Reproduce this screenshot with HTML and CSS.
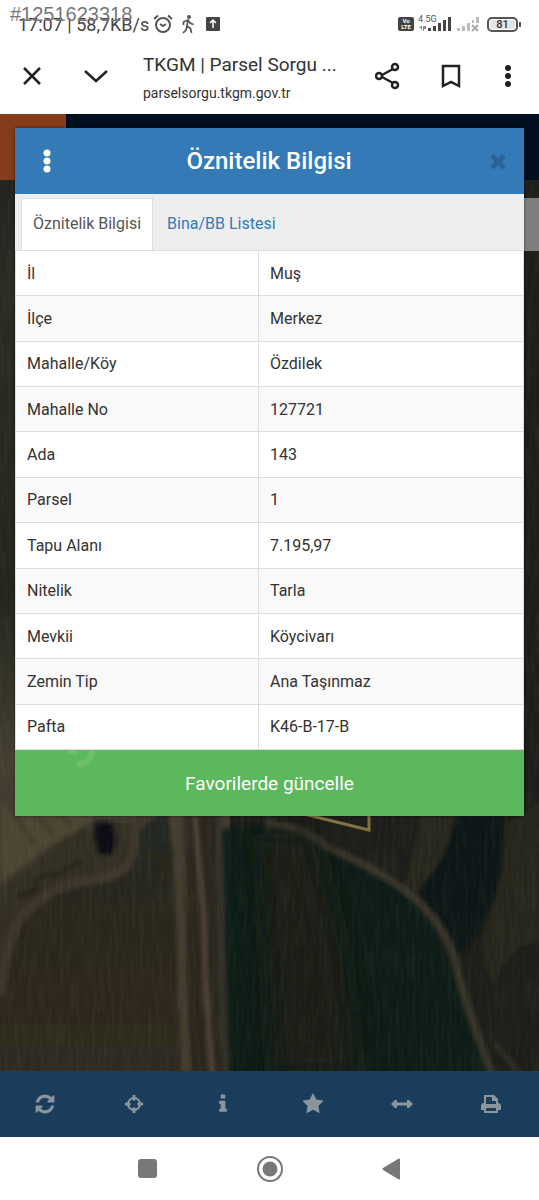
FILE: index.html
```html
<!DOCTYPE html>
<html lang="tr">
<head>
  <meta charset="UTF-8">
  <title>TKGM | Parsel Sorgu</title>
  <meta name="viewport" content="width=device-width, initial-scale=1.0">
  <link rel="stylesheet" href="styles.css">
</head>
<body>
  <div class="status-bar">
    <span class="ilan-no">#1251623318</span>
    <span class="clock">17:07 | 58,7KB/s</span>
    <svg class="alarm" width="20" height="20" viewBox="0 0 20 20" fill="none" stroke="#555" stroke-width="2">
      <circle cx="10" cy="11" r="7"/>
      <path d="M7 10l3 2 3-2M1 5l4-3.500M19 5l-4-3.500"/>
    </svg>
    <svg class="walk" width="12" height="20" viewBox="0 0 12 20" fill="none" stroke="#555" stroke-width="1.700">
      <circle cx="7" cy="3" r="2" fill="#555" stroke="none"/>
      <path d="M1.500 11V8L6 6l2 3 3.500 1.500M6 6l-1 6 3.500 2.500 1 4.500M5 12l-1 4-3 3"/>
    </svg>
    <svg class="upload" width="14" height="20" viewBox="0 0 14 20">
      <rect y="3" width="14" height="14" rx="1" fill="#444"/>
      <path d="M7 14V6M4 9l3-3 3 3" fill="none" stroke="#fff" stroke-width="1.500"/>
    </svg>
    <div class="signals">
      <span class="volte">Vo<br>LTE</span>
      <span class="network">
        <span>4.5G</span>
        <svg width="34" height="16" viewBox="0 0 34 16" fill="#444">
          <path d="M3 10h1v4H3v-2H1zM5 10h3v3H6v2H5z" fill="#888"/>
          <path d="M10 12h3v3h-3zM15 10h3v5h-3zM20 7h3v8h-3zM25 4h3v11h-3zM30 1h3v14h-3z"/>
        </svg>
      </span>
      <svg width="24" height="16" viewBox="0 0 24 16" fill="#bbb">
        <path d="M1 12h3v3H1zM6 10h3v5H6zM11 7h3v8h-3zM16 4h2v3h-2zM20 1h3v6h-3z"/>
        <path d="M16 9l6 6M22 9l-6 6" stroke="#aaa" stroke-width="2"/>
      </svg>
      <span class="battery">81</span>
    </div>
  </div>

  <header class="browser-bar">
    <button class="icon-btn" aria-label="Kapat">
      <svg width="24" height="24" viewBox="0 0 24 24"><path d="M4 4l16 16M20 4L4 20"/></svg>
    </button>
    <button class="icon-btn" aria-label="Küçült">
      <svg width="24" height="24" viewBox="0 0 24 24"><path d="M1 7l11 10L23 7"/></svg>
    </button>
    <div class="page-info">
      <div class="page-title">TKGM | Parsel Sorgu ...</div>
      <div class="page-url">parselsorgu.tkgm.gov.tr</div>
    </div>
    <button class="icon-btn share" aria-label="Paylaş">
      <svg width="26" height="28" viewBox="0 0 26 28"><path d="M7 13l11-6M7 15l11 6"/><circle cx="4" cy="14" r="3"/><circle cx="20" cy="5" r="3"/><circle cx="20" cy="23" r="3"/></svg>
    </button>
    <button class="icon-btn bookmark" aria-label="Yer işareti">
      <svg width="20" height="26" viewBox="0 0 20 26"><path d="M2 3h16v20l-8-4-8 4z"/></svg>
    </button>
    <button class="icon-btn more" aria-label="Diğer">
      <svg width="6" height="24" viewBox="0 0 6 24"><g fill="#222" stroke="none"><circle cx="3" cy="4" r="3"/><circle cx="3" cy="12" r="3"/><circle cx="3" cy="20" r="3"/></g></svg>
    </button>
  </header>

  <main class="map">
    <svg class="map-image" viewBox="0 0 539 957" preserveAspectRatio="xMidYMax slice" aria-hidden="true">
      <defs>
        <filter id="soft" x="-5%" y="-5%" width="110%" height="110%"><feGaussianBlur stdDeviation="2"/></filter>
        <filter id="blend" x="-20%" y="-20%" width="140%" height="140%"><feGaussianBlur stdDeviation="12"/></filter>
        <filter id="soil" x="0" y="0" width="100%" height="100%">
          <feTurbulence type="fractalNoise" baseFrequency="0.25 0.03" numOctaves="3" seed="4"/>
          <feColorMatrix values="0 0 0 0 .5  0 0 0 0 .48  0 0 0 0 .38  .9 0 0 0 -.35"/>
        </filter>
        <linearGradient id="side" x1="0" y1="0" x2="0" y2="1">
          <stop offset="0" stop-color="#1c1e1c"/>
          <stop offset=".18" stop-color="#2c2b24"/>
          <stop offset=".5" stop-color="#23251d"/>
          <stop offset=".68" stop-color="#433e30"/>
          <stop offset="1" stop-color="#2b271f"/>
        </linearGradient>
        <linearGradient id="field" x1="0" y1="0" x2="0" y2="1">
          <stop offset="0" stop-color="#222720"/>
          <stop offset=".5" stop-color="#2c271f"/>
          <stop offset="1" stop-color="#302a20"/>
        </linearGradient>
      </defs>
      <rect width="539" height="957" fill="#1d1e19"/>
      <rect width="230" height="957" fill="url(#side)"/>
      <g filter="url(#soft)">
        <path d="M0 690h100l-10 18-38 22-52 40z" fill="#4c4532"/>
        <path d="M8 690l26 40M28 690l24 30M50 690l22 22" stroke="#3d3829" stroke-width="4"/>
        <path d="M0 775l52-42 40-24h50l-14 50-60 16-40 20-28 30z" fill="#332e23"/>
        <path d="M134 714q10-14 36-14l6 90 8 177H-10v-74q15-76 52-102 24-20 62-26 22-2 26-51z" fill="url(#field)"/>
        <path d="M0 880q8-60 22-78 26-30 68-36 34-4 40-20t4-26q4-14 20-20" fill="none" stroke="#3c3529" stroke-width="10"/>
        <path d="M16 782q22-2 20-12t24-10l22-14" fill="none" stroke="#262119" stroke-width="4"/>
        <path d="M95 708h18l3 20-4 14-14-2-4-16z" fill="#0b0e12"/>
        <path d="M186 700h34l6 267h-38z" fill="#2a251f"/>
        <path d="M172 700q7 30 8 90t7 177" fill="none" stroke="#453d2d" stroke-width="8"/>
        <path d="M218 700q0 50 2 130t6 137" fill="none" stroke="#33302a" stroke-width="5"/>
        <path d="M222 716q60-18 100 10 90 40 120 104 20 50 52 137H230z" fill="#111a17"/>
        <path d="M428 745q24-18 30-45h44q4 60-12 95l-28 48q-20-10-42-60z" fill="#0b1316"/>
        <path d="M405 770q8-30 16-70h34q-6 40-22 58t-18 24z" fill="#26251d"/>
        <path d="M539 690v140q-20-10-46 40-16-34-4-70 14-28 18-90z" fill="#25251c"/>
        <path d="M265 708q35 4 64 26 60 26 90 54 30 30 38 66t38 113" fill="none" stroke="#39352a" stroke-width="7"/>
        <path d="M495 930l30 35" stroke="#312e25" stroke-width="5"/>
        <path d="M195 702q4 50 8 90l3 80q3 50 7 95" fill="none" stroke="#54463b" stroke-width="4"/>
      </g>
      <path d="M262 720h50q14 60 30 120l14 120h-80q-8-120-14-240z" fill="#1b1f18" filter="url(#blend)"/>
      <rect y="60" width="539" height="897" filter="url(#soil)" opacity=".14"/>
      <path d="M300 699l69 17v-20" fill="none" stroke="#7d7442" stroke-width="3"/>
    </svg>
    <div class="site-bar"><div class="site-logo"></div></div>
    <div class="side-control"></div>

    <section class="modal">
      <div class="modal-header">
        <button class="menu-btn" aria-label="Menü">
          <svg width="8" height="24" viewBox="0 0 8 24" fill="#fff"><circle cx="4" cy="4" r="3.500"/><circle cx="4" cy="12" r="3.500"/><circle cx="4" cy="20" r="3.500"/></svg>
        </button>
        <h1>Öznitelik Bilgisi</h1>
        <button class="close-btn" aria-label="Kapat">
          <svg width="22" height="22" viewBox="0 0 1792 1792" fill="#2a6295"><path d="M1490 1322q0 40-28 68l-136 136q-28 28-68 28t-68-28l-294-294-294 294q-28 28-68 28t-68-28l-136-136q-28-28-28-68t28-68l294-294-294-294q-28-28-28-68t28-68l136-136q28-28 68-28t68 28l294 294 294-294q28-28 68-28t68 28l136 136q28 28 28 68t-28 68l-294 294 294 294q28 28 28 68z"/></svg>
        </button>
      </div>
      <nav class="tabs">
        <a href="#oznitelik" class="active">Öznitelik Bilgisi</a>
        <a href="#bina">Bina/BB Listesi</a>
      </nav>
      <table class="bilgi" id="oznitelik">
        <tbody>
          <tr><th scope="row">İl</th><td>Muş</td></tr>
          <tr><th scope="row">İlçe</th><td>Merkez</td></tr>
          <tr><th scope="row">Mahalle/Köy</th><td>Özdilek</td></tr>
          <tr><th scope="row">Mahalle No</th><td>127721</td></tr>
          <tr><th scope="row">Ada</th><td>143</td></tr>
          <tr><th scope="row">Parsel</th><td>1</td></tr>
          <tr><th scope="row">Tapu Alanı</th><td>7.195,97</td></tr>
          <tr><th scope="row">Nitelik</th><td>Tarla</td></tr>
          <tr><th scope="row">Mevkii</th><td>Köycivarı</td></tr>
          <tr><th scope="row">Zemin Tip</th><td>Ana Taşınmaz</td></tr>
          <tr><th scope="row">Pafta</th><td>K46-B-17-B</td></tr>
        </tbody>
      </table>
      <button class="btn-favori">
        <svg class="watermark" width="40" height="18" viewBox="0 0 40 18" fill="none" stroke="#6cc06c" stroke-width="6"><path d="M8 0q4 3 8 1M16 14q12 1 16-14"/></svg>
        Favorilerde güncelle
      </button>
    </section>
  </main>

  <nav class="toolbar">
    <button aria-label="Yenile">
      <svg width="22" height="22" viewBox="0 0 1792 1792"><path d="M1639 1056q0 5-1 7-64 268-268 434.500t-478 166.500q-146 0-282.500-55t-243.500-157l-129 129q-19 19-45 19t-45-19-19-45v-448q0-26 19-45t45-19h448q26 0 45 19t19 45-19 45l-137 137q71 66 161 102t187 36q134 0 250-65t186-179q11-17 53-117 8-23 30-23h192q13 0 22.500 9.500t9.500 22.500zm25-800v448q0 26-19 45t-45 19h-448q-26 0-45-19t-19-45 19-45l138-138q-148-137-349-137-134 0-250 65t-186 179q-11 17-53 117-8 23-30 23h-199q-13 0-22.500-9.500t-9.500-22.500v-7q65-268 270-434.500t480-166.500q146 0 284 55.500t245 156.500l130-129q19-19 45-19t45 19 19 45z"/></svg>
    </button>
    <button aria-label="Konum">
      <svg width="20" height="20" viewBox="0 0 20 20"><circle cx="10" cy="10" r="6" fill="none" stroke="#8c949c" stroke-width="2"/><path d="M8.500 1h3v5.500h-3zM8.500 13.500h3V19h-3zM1 8.500h5.500v3H1zM13.500 8.500H19v3h-5.500z"/></svg>
    </button>
    <button aria-label="Bilgi">
      <svg width="22" height="22" viewBox="0 0 1792 1792"><path d="M1216 1344v128q0 26-19 45t-45 19h-512q-26 0-45-19t-19-45v-128q0-26 19-45t45-19h64v-384h-64q-26 0-45-19t-19-45v-128q0-26 19-45t45-19h384q26 0 45 19t19 45v576h64q26 0 45 19t19 45zm-128-1152v192q0 26-19 45t-45 19h-256q-26 0-45-19t-19-45v-192q0-26 19-45t45-19h256q26 0 45 19t19 45z"/></svg>
    </button>
    <button aria-label="Favoriler">
      <svg width="22" height="22" viewBox="0 0 1792 1792"><path d="M1728 647q0 22-26 48l-363 354 86 500q1 7 1 20 0 21-10.500 35.500t-30.500 14.500q-19 0-40-12l-449-236-449 236q-22 12-40 12-21 0-31.500-14.500t-10.500-35.500q0-6 2-20l86-500-364-354q-25-27-25-48 0-37 56-46l502-73 225-455q19-41 49-41t49 41l225 455 502 73q56 9 56 46z"/></svg>
    </button>
    <button aria-label="Ölçüm">
      <svg width="22" height="20" viewBox="0 0 22 20"><path d="M0 10l4-4h2v2.500h10V6h2l4 4-4 4h-2v-2.500H6V14H4z"/></svg>
    </button>
    <button aria-label="Yazdır">
      <svg width="20" height="20" viewBox="0 0 20 20"><path fill-rule="evenodd" d="M3 1h10l4 4v4q3 0 3 3v4h-3v3H3v-3H0v-4q0-3 3-3zM5 3v7h10V7h-4V3zM5 14v3h10v-3z"/></svg>
    </button>
  </nav>

  <nav class="android-nav">
    <button aria-label="Son uygulamalar"><svg width="20" height="20" viewBox="0 0 20 20"><rect x="0" y="0" width="19" height="19" rx="3"/></svg></button>
    <button aria-label="Ana ekran"><svg width="26" height="26" viewBox="0 0 26 26"><circle cx="13" cy="13" r="12" fill="none" stroke="#787878" stroke-width="2"/><circle cx="13" cy="13" r="7.500"/></svg></button>
    <button aria-label="Geri"><svg width="20" height="22" viewBox="0 0 20 22"><path d="M18 1v20q-1 1-2 0L1 12q-1-1 0-2L16 1q1-1 2 0z"/></svg></button>
  </nav>
</body>
</html>
```
FILE: styles.css
```css
* {
  box-sizing: border-box;
}
body {
  font-family: Roboto, "Liberation Sans", sans-serif;
  margin: 0;
  min-height: 100vh;
  display: flex;
  flex-direction: column;
  background: #fff;
  color: #333;
}
button {
  border: none;
  background: none;
  padding: 0;
  font-family: inherit;
  cursor: pointer;
}
svg {
  display: block;
}

/* telefon durum çubuğu */
.status-bar {
  position: relative;
  display: flex;
  align-items: center;
  height: 38px;
  padding: 10px 21px 0 18px;
}
.ilan-no {
  position: absolute;
  top: 2px;
  left: 10px;
  font: 20px/24px "Liberation Sans", sans-serif;
  color: #777;
}
.clock {
  padding-top: 2px;
  font-size: 18px;
  line-height: 24px;
  color: #444;
}
.alarm {
  margin-left: 4px;
}
.walk {
  margin-left: 9px;
}
.upload {
  margin-left: 12px;
}
.signals {
  display: flex;
  align-items: center;
  gap: 4px;
  margin-left: auto;
}
.volte {
  width: 16px;
  height: 14px;
  padding-top: 1px;
  border-radius: 2px;
  background: #444;
  color: #fff;
  font-size: 6px;
  font-weight: 700;
  line-height: 6px;
  text-align: center;
}
.network {
  position: relative;
}
.network span {
  position: absolute;
  top: -2px;
  left: 0;
  font-size: 9px;
  line-height: 10px;
  color: #555;
}
.battery {
  position: relative;
  width: 31px;
  height: 15px;
  margin-left: 3px;
  border: 2px solid #555;
  border-radius: 5px;
  background: #e4e4e4;
  box-shadow: inset 0 0 0 1px #fff;
  font-size: 11px;
  font-weight: 500;
  line-height: 12px;
  text-align: center;
}
.battery::after {
  content: "";
  position: absolute;
  top: 3px;
  right: -5px;
  width: 2px;
  height: 5px;
  background: #555;
}

/* tarayıcı başlığı */
.browser-bar {
  display: flex;
  align-items: center;
  height: 76px;
  padding: 0 28px 0 20px;
}
.icon-btn svg {
  fill: none;
  stroke: #222;
  stroke-width: 2.5;
}
.icon-btn + .icon-btn {
  margin-left: 40px;
}
.page-info {
  flex: 1;
  margin-left: 35px;
  padding-top: 4px;
  white-space: nowrap;
  overflow: hidden;
}
.page-title {
  font-size: 19px;
  line-height: 28px;
}
.page-url {
  padding-top: 2px;
  font-size: 14px;
  line-height: 24px;
}
.icon-btn.more {
  margin-left: 44px;
}

/* harita */
.map {
  position: relative;
  flex: 1;
  padding: 14px 15px;
  overflow: hidden;
  background: #1d1e19;
}
.map-image {
  position: absolute;
  top: 0;
  left: 0;
  width: 100%;
  height: 100%;
}
.site-bar {
  position: absolute;
  top: 0;
  left: 0;
  right: 0;
  height: 66px;
  background: #00101f;
}
.site-logo {
  width: 66px;
  height: 100%;
  background: #843c1c;
}
.side-control {
  position: absolute;
  top: 84px;
  right: 0;
  width: 56px;
  height: 53px;
  background: #7f7f7f;
}

/* pencere */
.modal {
  position: relative;
  background: #fff;
  box-shadow: 0 0 3px rgba(0, 0, 0, 0.5);
}
.modal-header {
  display: flex;
  align-items: center;
  justify-content: space-between;
  height: 66px;
  padding: 0 15px 0 28px;
  background: #337ab7;
}
.modal-header h1 {
  margin: 0;
  font-size: 24px;
  font-weight: 500;
  color: #fff;
}
.tabs {
  display: flex;
  height: 56px;
  padding: 4px 6px 0;
  background: #eee;
}
.tabs a {
  padding: 0 14px;
  font-size: 16px;
  line-height: 52px;
  color: #337ab7;
  text-decoration: none;
}
.tabs a.active {
  padding: 0 11px;
  background: #fff;
  border: 1px solid #ddd;
  border-bottom: none;
  color: #555;
  line-height: 50px;
}
.bilgi {
  width: 100%;
  height: 500px;
  table-layout: fixed;
  border-collapse: collapse;
  font-size: 16px;
  line-height: 20px;
}
.bilgi th, .bilgi td {
  padding: 12px 11px 11px;
  border: 1px solid #ddd;
  font-weight: 400;
  text-align: left;
}
.bilgi th {
  width: 243px;
}
.bilgi tr:nth-child(even) {
  background: #f9f9f9;
}
.btn-favori {
  position: relative;
  display: block;
  width: 100%;
  height: 66px;
  background: #5cb85c;
  color: #fff;
  font-size: 19px;
}
.watermark {
  position: absolute;
  top: 0;
  left: 46px;
}

/* alt çubuklar */
.toolbar {
  display: grid;
  grid-template-columns: repeat(6, 1fr);
  height: 66px;
  padding-right: 3px;
  background: #1a3d5c;
}
.toolbar button, .android-nav button {
  display: flex;
  align-items: center;
  justify-content: center;
}
.toolbar svg {
  fill: #8c949c;
}
.android-nav {
  display: flex;
  justify-content: center;
  gap: 99px;
  height: 63px;
}
.android-nav svg {
  fill: #787878;
}
```
